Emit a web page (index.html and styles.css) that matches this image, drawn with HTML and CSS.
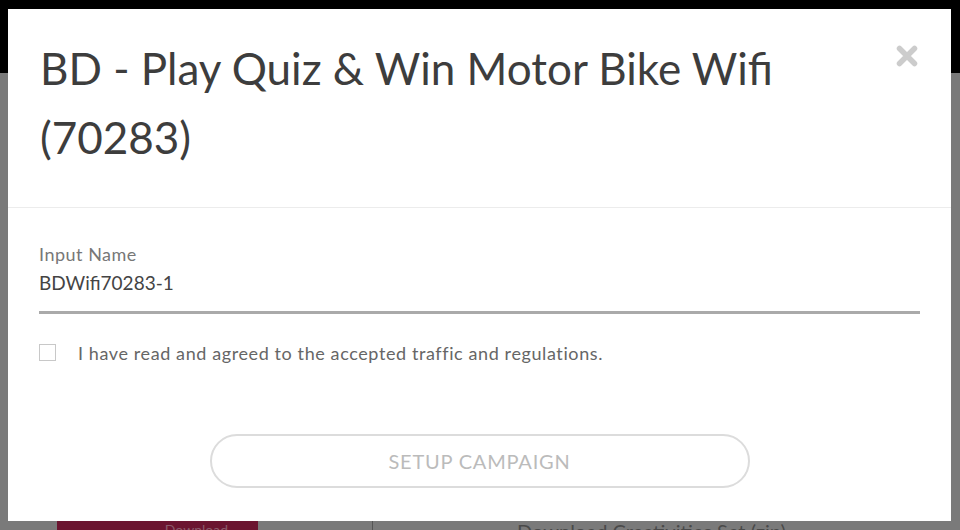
FILE: index.html
```html
<!DOCTYPE html>
<html lang="en">
<head>
<meta charset="utf-8">
<title>Setup Campaign</title>
<link rel="stylesheet" href="styles.css">
</head>
<body>
<div class="page">
  <header class="topbar"></header>
  <main class="content">
    <div class="bottom-row">
      <div class="cta">Download</div>
      <div class="tick"></div>
      <div class="dl">Download Creativities Set (zip)</div>
    </div>
  </main>
</div>

<div class="modal">
  <div class="modal-header">
    <h1 class="modal-title">BD - Play Quiz &amp; Win Motor Bike Wifi (70283)</h1>
    <svg class="close" width="22" height="22" viewBox="0 0 22 22" aria-label="close">
      <path d="M3.5 3.5 L18.5 18.5 M18.5 3.5 L3.5 18.5" stroke="#cccccc" stroke-width="5.5" stroke-linecap="round" fill="none"/>
    </svg>
  </div>
  <div class="modal-body">
    <label class="field">
      <span class="field-label">Input Name</span>
      <span class="field-value">BDWifi70283-1</span>
    </label>
    <div class="agree">
      <span class="checkbox"></span>
      <span class="agree-text">I have read and agreed to the accepted traffic and regulations.</span>
    </div>
    <div class="actions">
      <button class="setup">SETUP CAMPAIGN</button>
    </div>
  </div>
</div>
</body>
</html>
```

FILE: styles.css
```css
* { box-sizing: border-box; }
html, body { margin: 0; padding: 0; }
body {
  width: 960px;
  height: 530px;
  overflow: hidden;
  position: relative;
  font-family: Lato, "Open Sans", sans-serif;
  background: #7a7a7a;
}
.page {
  display: flex;
  flex-direction: column;
  height: 530px;
}
.topbar {
  flex: none;
  height: 73px;
  background: #000;
}
.content {
  flex: 1;
  background: #7a7a7a;
  padding-top: 448px;
}
.bottom-row {
  display: flex;
  align-items: flex-start;
  height: 30px;
}
.cta {
  margin-left: 57px;
  width: 201px;
  height: 30px;
  background: #6b1530;
  color: #8a5a6a;
  font-size: 14px;
  text-align: right;
  padding-right: 30px;
}
.tick {
  margin-left: 114px;
  width: 1px;
  height: 30px;
  background: #555;
}
.dl {
  margin-left: 144px;
  color: #4a4a4a;
  font-size: 20px;
  line-height: 20px;
  padding-top: 0;
}

.modal {
  position: absolute;
  left: 8px;
  top: 9px;
  width: 943px;
  height: 512px;
  background: #fff;
  display: flex;
  flex-direction: column;
}
.modal-header {
  display: flex;
  align-items: flex-start;
  padding: 25px 33px 35px 32px;
  border-bottom: 1px solid #ececec;
}
.modal-title {
  flex: 1;
  margin: 0;
  padding-right: 90px;
  font-weight: 400;
  font-size: 44px;
  line-height: 69px;
  color: #3d3d3d;
}
.close {
  margin-top: 11px;
  flex: none;
}
.modal-body {
  padding: 36px 31px 0 31px;
  display: flex;
  flex-direction: column;
}
.field {
  display: flex;
  flex-direction: column;
  border-bottom: 3px solid #aaaaaa;
  padding-bottom: 15px;
}
.field-label {
  font-size: 18px;
  line-height: 20px;
  letter-spacing: 0.5px;
  color: #777;
}
.field-value {
  margin-top: 6px;
  font-size: 19px;
  line-height: 26px;
  color: #444;
}
.agree {
  display: flex;
  align-items: center;
  margin-top: 30px;
  height: 17px;
}
.checkbox {
  width: 17px;
  height: 17px;
  border: 1px solid #c8c8c8;
  flex: none;
}
.agree-text {
  margin-left: 22px;
  font-size: 18px;
  line-height: 20px;
  letter-spacing: 0.6px;
  color: #666;
}
.actions {
  display: flex;
  justify-content: center;
  margin-top: 73px;
}
.setup {
  width: 540px;
  height: 54px;
  border: 2px solid #dcdcdc;
  border-radius: 27px;
  background: #fff;
  color: #bbbbbb;
  font-family: Lato, "Open Sans", sans-serif;
  font-size: 20px;
  letter-spacing: 0.8px;
}
```
